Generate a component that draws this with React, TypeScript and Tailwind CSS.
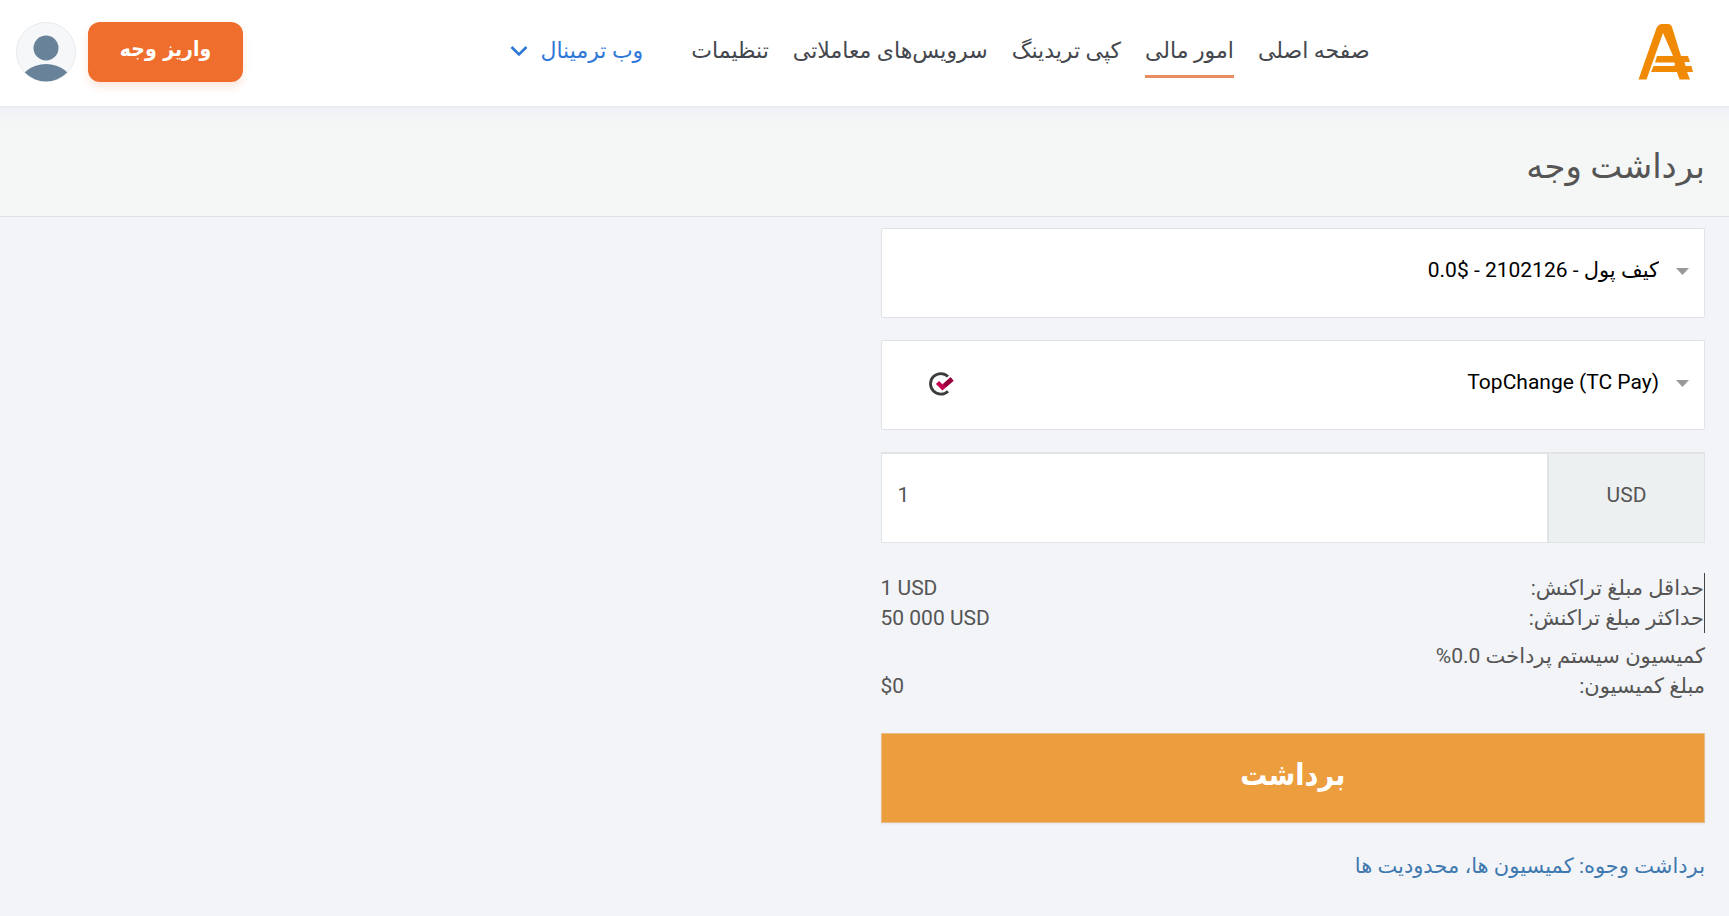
import { useState } from "react";
import type { ReactNode } from "react";

const navItems = [
  { label: "صفحه اصلی", active: false },
  { label: "امور مالی", active: true },
  { label: "کپی تریدینگ", active: false },
  { label: "سرویس‌های معاملاتی", active: false },
  { label: "تنظیمات", active: false },
];

function Logo() {
  return (
    <svg width="57" height="60" viewBox="0 0 57 60" fill="#f08a05" aria-hidden="true">
      <path d="M1.500 57.500 L19.500 6 Q21.500 2 25 2 H31 Q34 2 35 5 L44 34 H51 L53 40 H47.500 L48.500 44 H54.500 L56 50 H50 L53 57.500 H42.500 L40 50 H14 L16.500 44 H37 Q39 42 37 40.500 H18 L20 34 H36 L26 11 L9.500 57.500 Z" />
    </svg>
  );
}

function Avatar() {
  return (
    <svg width="60" height="60" viewBox="0 0 60 60" aria-hidden="true">
      <defs>
        <clipPath id="avatar-clip">
          <circle cx="30" cy="30" r="29.500" />
        </clipPath>
      </defs>
      <circle cx="30" cy="30" r="29.500" fill="#f5f7f9" stroke="#e6eaee" />
      <g clipPath="url(#avatar-clip)" fill="#68829a">
        <circle cx="30" cy="26" r="12.500" />
        <ellipse cx="30" cy="64" rx="27" ry="22" />
      </g>
    </svg>
  );
}

function TopChangeMark() {
  return (
    <svg width="26" height="24" viewBox="0 0 26 24" fill="none" aria-hidden="true">
      <path d="M19 4.500 A10.300 10.300 0 1 0 19 19.200" stroke="#3c3c3b" strokeWidth="2.800" />
      <path d="M8.500 10.500 L13.500 15.500 L23 7" stroke="#c4004f" strokeWidth="4.400" />
      <path d="M15.500 13.700 L23 7" stroke="#95003c" strokeWidth="4.400" />
    </svg>
  );
}

function SelectField({
  label,
  value,
  ltr = false,
  children,
}: {
  label: string;
  value: string;
  ltr?: boolean;
  children?: ReactNode;
}) {
  return (
    <div className="relative">
      <select
        aria-label={label}
        dir={ltr ? "ltr" : "rtl"}
        className="block h-[90px] w-full appearance-none rounded-xs border border-[#dfe3e6] bg-white pr-[45px] pl-12 pb-1 text-right text-[21px] text-black"
      >
        <option>{value}</option>
      </select>
      <svg
        className="pointer-events-none absolute top-10 right-4"
        width="13"
        height="7"
        viewBox="0 0 13 7"
        fill="#999999"
        aria-hidden="true"
      >
        <path d="M0 0 H13 L6.500 7 Z" />
      </svg>
      {children}
    </div>
  );
}

function Row({ label, value }: { label: string; value?: string }) {
  return (
    <div className="flex justify-between">
      <dt>{label}</dt>
      {value && <dd dir="ltr">{value}</dd>}
    </div>
  );
}

export default function App() {
  const [amount, setAmount] = useState("1");

  return (
    <div
      dir="rtl"
      className="min-h-screen bg-[#f2f4f8] font-['Roboto','DejaVu_Sans',sans-serif] text-[#555555]"
    >
      <header className="flex h-[108px] items-center justify-between border-b-2 border-[#ebecf2] bg-white pr-[35px] pb-[2px] pl-4">
        <a href="#" aria-label="Alpari">
          <Logo />
        </a>
        <nav className="flex items-center gap-6 text-[22px] leading-8 font-medium text-[#43474d]">
          {navItems.map((item) => (
            <a
              key={item.label}
              href="#"
              className={
                item.active
                  ? "border-b-3 border-[#ea8c62] py-2"
                  : "border-b-3 border-transparent py-2"
              }
            >
              {item.label}
            </a>
          ))}
          <a
            href="#"
            className="mr-6 flex items-center gap-3 border-b-3 border-transparent py-2 text-[#2f78d7]"
          >
            وب ترمینال
            <svg width="18" height="12" viewBox="0 0 18 12" fill="none" aria-hidden="true">
              <path d="M1.500 2 L9 9.500 L16.500 2" stroke="currentColor" strokeWidth="2.600" />
            </svg>
          </a>
        </nav>
        <div className="flex items-center gap-3">
          <button
            type="button"
            className="h-[60px] w-[155px] rounded-xl bg-[#f06e2d] pb-1 font-['DejaVu_Sans_Condensed','DejaVu_Sans',sans-serif] text-[21px] font-bold text-white shadow-[0_5px_8px_#fbe6dc]"
          >
            واریز وجه
          </button>
          <button type="button" aria-label="Profile">
            <Avatar />
          </button>
        </div>
      </header>

      <div className="border-b border-[#dde1e1] bg-[linear-gradient(#f1f2f8,#f5f7f6_20px)] px-6 pt-9 pb-7">
        <h1 className="text-[34px] leading-[44px]">برداشت وجه</h1>
      </div>

      <main className="w-1/2 pt-[11px] pr-6 pl-4">
        <form className="flex flex-col" onSubmit={(e) => e.preventDefault()}>
          <div className="flex flex-col gap-[22px]">
            <SelectField label="حساب" value="کیف پول - 2102126 - $0.0" />
            <SelectField label="روش برداشت" value="TopChange (TC Pay)" ltr>
              <span className="pointer-events-none absolute top-8 left-12">
                <TopChangeMark />
              </span>
            </SelectField>
            <div className="flex h-[91px] border border-t-2 border-[#dfe4e6] bg-white text-[21px]">
              <label
                htmlFor="amount"
                className="flex w-[157px] items-center justify-center border-l-2 border-[#dfe4e5] bg-[#ecf0f1] pb-1"
              >
                USD
              </label>
              <input
                id="amount"
                dir="ltr"
                inputMode="decimal"
                value={amount}
                onChange={(e) => setAmount(e.target.value)}
                className="min-w-0 flex-1 bg-transparent px-4 pb-1 outline-none"
              />
            </div>
          </div>

          <dl className="mt-[30px] border-r border-[#444444] text-[21px] leading-[30px]">
            <Row label="حداقل مبلغ تراکنش:" value="1 USD" />
            <Row label="حداکثر مبلغ تراکنش:" value="50 000 USD" />
          </dl>
          <dl className="mt-2 text-[21px] leading-[30px]">
            <Row label="کمیسیون سیستم پرداخت 0.0%" />
            <Row label="مبلغ کمیسیون:" value="$0" />
          </dl>

          <button
            type="submit"
            className="mt-8 h-[90px] border border-[#e6bd8a] bg-[#ec9d3e] pb-2 font-['DejaVu_Sans_Condensed','DejaVu_Sans',sans-serif] text-[30px] font-bold text-white shadow-xs"
          >
            برداشت
          </button>
        </form>
        <a href="#" className="mt-7 inline-block text-[21px] leading-[30px] text-[#3f79b0]">
          برداشت وجوه: کمیسیون ها، محدودیت ها
        </a>
      </main>
    </div>
  );
}
